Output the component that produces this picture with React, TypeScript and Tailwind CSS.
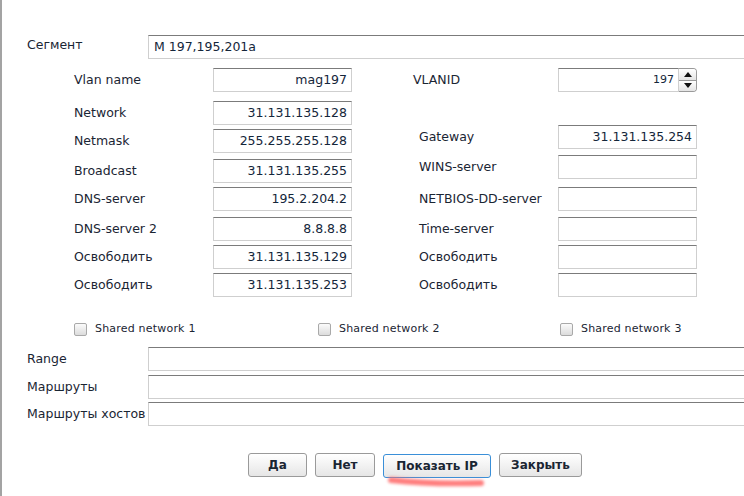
import React from 'react';

const font = { fontFamily: '"DejaVu Sans", Verdana, sans-serif' };

const Field: React.FC<{ value?: string; className?: string }> = ({ value = '', className = '' }) => (
  <div
    className={`h-[24px] w-[139px] border border-[#cfcfcf] border-t-[#7b7b7b] bg-white flex items-center justify-end pr-[4px] text-[12.5px] text-[#14263a] ${className}`}
  >
    {value}
  </div>
);

const Row: React.FC<{ label: string; value?: string; labelW: string; mt: string; labelClass?: string }> = ({
  label,
  value,
  labelW,
  mt,
  labelClass = '',
}) => (
  <div className={`flex items-center ${mt}`}>
    <div className={`${labelW} text-[12.5px] text-[#1a2533] ${labelClass}`}>{label}</div>
    <Field value={value} />
  </div>
);

const Checkbox: React.FC<{ label: string; className?: string }> = ({ label, className = '' }) => (
  <div className={`flex items-center ${className}`}>
    <div className="h-[13px] w-[13px] rounded-[2px] border border-[#a9a9a9] bg-gradient-to-b from-[#fbfbfb] to-[#dcdcdc]" />
    <span className="ml-[8px] text-[11px] tracking-[0.2px] text-[#1a2533]">{label}</span>
  </div>
);

const WideRow: React.FC<{ label: string; mt: string }> = ({ label, mt }) => (
  <div className={`flex items-center ${mt}`}>
    <div className="w-[146px] shrink-0 whitespace-nowrap pl-[25px] text-[12.5px] text-[#1a2533]">{label}</div>
    <div className="h-[24px] flex-1 border border-r-0 border-[#cfcfcf] border-t-[#7b7b7b] bg-white" />
  </div>
);

const Btn: React.FC<{ label: string; active?: boolean; w: string }> = ({ label, active, w }) => (
  <button
    className={`h-[24px] ${w} rounded-[3px] border bg-gradient-to-b from-white to-[#e6e6e6] text-[12px] font-bold text-[#1a2533] ${
      active ? 'border-[#3a8fd8]' : 'border-[#9a9a9a]'
    }`}
  >
    {label}
  </button>
);

export default function App() {
  return (
    <div className="h-[496px] w-[744px] overflow-hidden bg-white" style={font}>
      <div className="h-full border-l-2 border-[#a3a3a3] pt-[35px]">
        {/* Segment */}
        <div className="flex items-center">
          <div className="w-[146px] -mt-[4px] pl-[25px] text-[12.5px] text-[#1a2533]">Сегмент</div>
          <div className="h-[24px] flex-1 border border-r-0 border-[#cfcfcf] border-t-[#7b7b7b] bg-white flex items-center pl-[5px] text-[12.5px] text-[#14263a]">
            М 197,195,201а
          </div>
        </div>

        <div className="mt-[9px] flex">
          {/* left column */}
          <div className="ml-[72px] flex flex-col">
            <Row label="Vlan name" value="mag197" labelW="w-[139px]" mt="" />
            <Row label="Network" value="31.131.135.128" labelW="w-[139px]" mt="mt-[9px]" />
            <Row label="Netmask" value="255.255.255.128" labelW="w-[139px]" mt="mt-[4px]" />
            <Row label="Broadcast" value="31.131.135.255" labelW="w-[139px]" mt="mt-[6px]" />
            <Row label="DNS-server" value="195.2.204.2" labelW="w-[139px]" mt="mt-[4px]" />
            <Row label="DNS-server 2" value="8.8.8.8" labelW="w-[139px]" mt="mt-[6px]" />
            <Row label="Освободить" value="31.131.135.129" labelW="w-[139px]" mt="mt-[4px]" />
            <Row label="Освободить" value="31.131.135.253" labelW="w-[139px]" mt="mt-[4px]" />
          </div>

          {/* right column */}
          <div className="ml-[61px] flex flex-col">
            <div className="flex items-center">
              <div className="w-[145px] text-[12.5px] text-[#1a2533]">VLANID</div>
              <div className="flex">
                <div className="h-[24px] w-[121px] border border-[#cfcfcf] border-t-[#7b7b7b] bg-white flex items-center justify-end pr-[4px] text-[11px] text-[#14263a]">
                  197
                </div>
                <div className="flex h-[24px] w-[18px] flex-col overflow-hidden rounded-r-[4px] border border-l-0 border-[#9a9a9a]">
                  <div className="flex flex-1 items-center justify-center border-b border-[#9a9a9a] bg-gradient-to-b from-white to-[#e4e4e4]">
                    <svg width="8" height="5" viewBox="0 0 8 5">
                      <path d="M0 5 L4 0 L8 5 Z" fill="#111" />
                    </svg>
                  </div>
                  <div className="flex flex-1 items-center justify-center bg-gradient-to-b from-white to-[#e4e4e4]">
                    <svg width="8" height="5" viewBox="0 0 8 5">
                      <path d="M0 0 L4 5 L8 0 Z" fill="#111" />
                    </svg>
                  </div>
                </div>
              </div>
            </div>
            <Row label="Gateway" value="31.131.135.254" labelW="w-[139px]" mt="mt-[33px]" labelClass="ml-[6px]" />
            <Row label="WINS-server" labelW="w-[139px]" mt="mt-[6px]" labelClass="ml-[6px]" />
            <Row label="NETBIOS-DD-server" labelW="w-[139px]" mt="mt-[8px]" labelClass="ml-[6px]" />
            <Row label="Time-server" labelW="w-[139px]" mt="mt-[6px]" labelClass="ml-[6px]" />
            <Row label="Освободить" labelW="w-[139px]" mt="mt-[4px]" labelClass="ml-[6px]" />
            <Row label="Освободить" labelW="w-[139px]" mt="mt-[4px]" labelClass="ml-[6px]" />
          </div>
        </div>

        {/* shared networks */}
        <div className="mt-[26px] flex h-[13px]">
          <Checkbox label="Shared network 1" className="ml-[72px] w-[244px]" />
          <Checkbox label="Shared network 2" className="w-[242px]" />
          <Checkbox label="Shared network 3" />
        </div>

        <WideRow label="Range" mt="mt-[11px]" />
        <WideRow label="Маршруты" mt="mt-[4px]" />
        <WideRow label="Маршруты хостов" mt="mt-[3px]" />

        {/* buttons */}
        <div className="mt-[27px] flex gap-[8px] pl-[246px]">
          <Btn label="Да" w="w-[59px]" />
          <Btn label="Нет" w="w-[60px]" />
          <div className="relative">
            <Btn label="Показать IP" active w="w-[108px]" />
            <svg className="absolute left-[2px] top-[21px] blur-[1.5px]" width="104" height="14" viewBox="0 0 104 14">
              <path d="M6 6 C32 9, 62 10, 96 9" stroke="#ff6f6f" strokeWidth="6" strokeLinecap="round" fill="none" opacity="0.9" />
            </svg>
          </div>
          <Btn label="Закрыть" w="w-[83px]" />
        </div>
      </div>
    </div>
  );
}
